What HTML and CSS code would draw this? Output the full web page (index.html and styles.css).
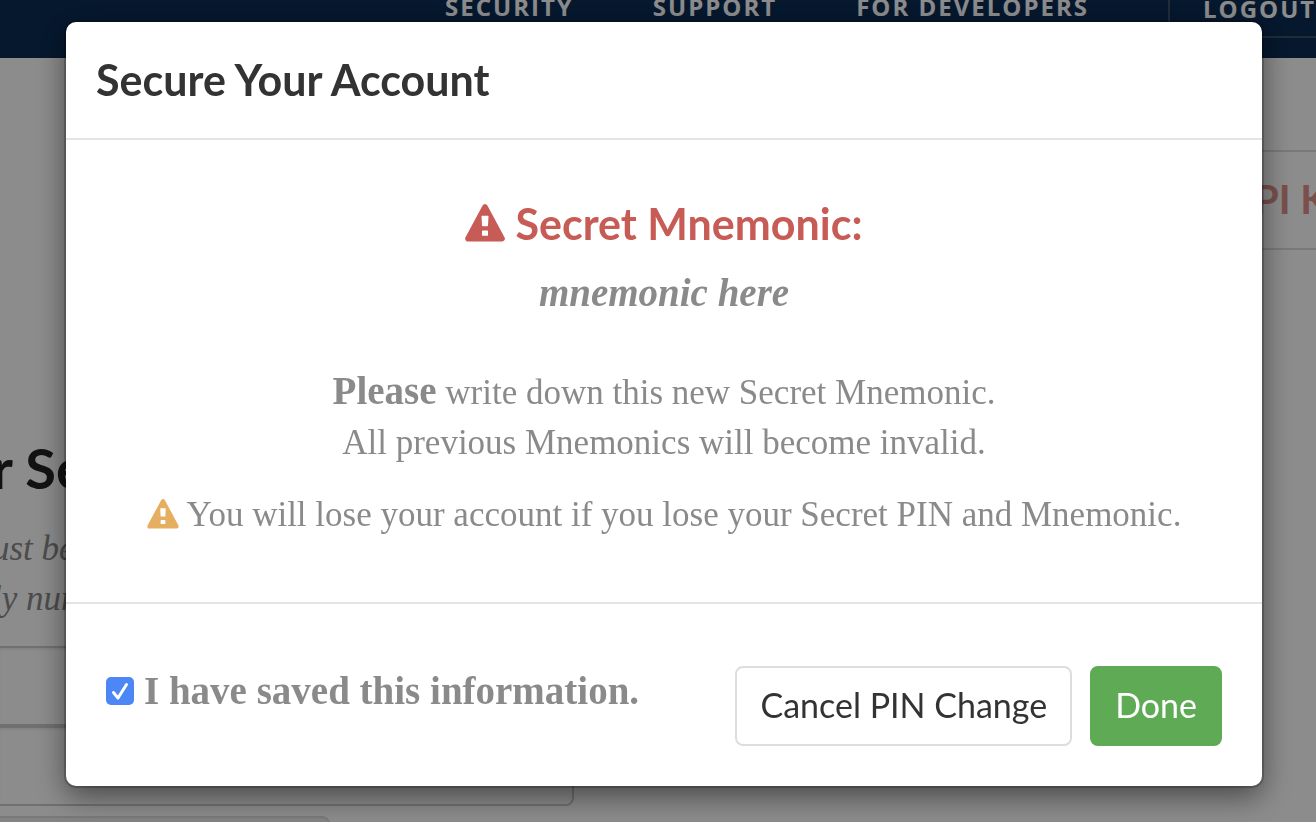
FILE: index.html
```html
<!DOCTYPE html>
<html lang="en">
	<head>
		<meta charset="utf-8" />
		<title>Secure Your Account</title>
		<meta name="viewport" content="width=device-width, initial-scale=1.0" />
		<link rel="stylesheet" href="styles.css">
	</head>

	<body>
		<div class="page">
			<header class="navbar">
				<nav class="nav">
					<a href="#security">SECURITY</a>
					<a href="#support">SUPPORT</a>
					<a href="#developers">FOR DEVELOPERS</a>
				</nav>
				<a class="logout" href="#logout">LOGOUT</a>
			</header>

			<div class="tabs">
				<a href="#keys">PI Keys</a>
			</div>

			<div class="pin-form">
				<h1>r Secret</h1>
				<p class="hint">ust be<br />ly num</p>
				<input class="top" type="password" aria-label="PIN" />
				<input class="bottom" type="password" aria-label="Confirm PIN" />
				<button type="button" class="change" aria-label="Change PIN"></button>
			</div>
		</div>

		<div class="backdrop">
			<div class="modal" role="dialog" aria-labelledby="modal-title">
				<div class="modal-header">
					<h2 id="modal-title">Secure Your Account</h2>
				</div>

				<div class="modal-body">
					<h2 class="danger">
						<svg class="icon icon-lg" viewBox="0 0 40 38" aria-hidden="true">
							<path fill="currentColor" fill-rule="evenodd" d="M17.6 1.6Q18.500 0 20 0T22.400 1.600L39.600 33.500Q40.200 34.700 39.500 36T37.200 37.500H2.800Q1.200 37.500 .5 36T.4 33.500ZM17 11.700Q16.500 11.700 16.500 12.300L17 21.500Q17 22.200 17.700 22.200H22.300Q23 22.200 23 21.500L23.500 12.300Q23.500 11.700 23 11.700ZM17.600 26.500Q17 26.500 17 27.100V31.200Q17 31.800 17.600 31.800H22.400Q23 31.800 23 31.200V27.100Q23 26.500 22.400 26.500Z" />
						</svg>
						Secret Mnemonic:
					</h2>
					<p class="mnemonic">mnemonic here</p>
					<p class="note"><strong>Please</strong> write down this new Secret Mnemonic.<br />All previous Mnemonics will become invalid.</p>
					<p class="warning">
						<svg class="icon" viewBox="0 0 40 38" aria-hidden="true">
							<path fill="currentColor" fill-rule="evenodd" d="M17.6 1.6Q18.500 0 20 0T22.400 1.600L39.600 33.500Q40.200 34.700 39.500 36T37.200 37.500H2.800Q1.200 37.500 .5 36T.4 33.500ZM17 11.700Q16.500 11.700 16.500 12.300L17 21.500Q17 22.200 17.700 22.200H22.300Q23 22.200 23 21.500L23.500 12.300Q23.500 11.700 23 11.700ZM17.600 26.500Q17 26.500 17 27.100V31.200Q17 31.800 17.600 31.800H22.400Q23 31.800 23 31.200V27.100Q23 26.500 22.400 26.500Z" />
						</svg>
						You will lose your account if you lose your Secret PIN and Mnemonic.
					</p>
				</div>

				<div class="modal-footer">
					<label class="saved" for="saved">
						<span class="check">
							<input type="checkbox" id="saved" checked />
							<svg viewBox="0 0 28 28" aria-hidden="true"><path d="M7.500 15.500L12 21L20.500 7.500" /></svg>
						</span>
						I have saved this information.
					</label>
					<div class="buttons">
						<button type="button" class="btn">Cancel PIN Change</button>
						<button type="button" class="btn btn-success">Done</button>
					</div>
				</div>
			</div>
		</div>
	</body>
</html>
```

FILE: styles.css
```css
* {
  box-sizing: border-box;
}
body {
  margin: 0;
  color: #8a8a8a;
  font-family: "Liberation Serif", serif;
  font-size: 35px;
  line-height: 50px;
}
h1, h2, p {
  margin: 0;
}
h1, h2, .tabs, .btn {
  font-family: Lato, sans-serif;
}
h2 {
  color: #333;
  font-size: 43px;
  line-height: 44px;
}

/* page */
.page {
  height: 100vh;
  overflow: hidden;
  background: #fff;
}
.navbar {
  display: flex;
  justify-content: flex-end;
  height: 58px;
  background: #0b2c54;
}
.navbar a {
  color: #fff;
  font-family: "Open Sans", sans-serif;
  font-size: 24px;
  font-weight: bold;
  letter-spacing: 2px;
  line-height: 36px;
  text-decoration: none;
  white-space: nowrap;
}
.nav {
  display: flex;
  gap: 79px;
  margin-top: -11px;
  padding-right: 79px;
}
.navbar .logout {
  width: 148px;
  height: 38px;
  padding-left: 33px;
  border-left: 2px solid #3d5169;
  border-bottom: 2px solid #3d5169;
  line-height: 18px;
}
.tabs {
  display: flex;
  justify-content: flex-end;
  height: 100px;
  margin: 92px 0 0 50%;
  border: solid #ddd;
  border-width: 2px 0;
}
.tabs a {
  width: 62px;
  color: #de908a;
  font-size: 40px;
  font-weight: bold;
  line-height: 94px;
  text-decoration: none;
  white-space: nowrap;
}
.pin-form {
  display: flex;
  flex-direction: column;
  align-items: flex-start;
  width: 574px;
  margin-top: 188px;
}
.pin-form h1 {
  margin-left: -8px;
  color: #222;
  font-size: 56px;
  line-height: 60px;
}
.hint {
  margin: 26px 0 22px -8px;
  font-style: italic;
}
.pin-form input {
  width: 100%;
  height: 80px;
  border: 2px solid #ccc;
  border-left: 0;
  background: #fff;
  box-shadow: inset 0 2px 2px #eee;
}
.pin-form .bottom {
  border-radius: 0 0 8px 0;
}
.change {
  flex: none;
  width: 330px;
  height: 80px;
  margin-top: 10px;
  border: 2px solid #ddd;
  border-left: 0;
  border-radius: 0 8px 8px 0;
  background: #eee;
}

/* modal */
.backdrop {
  position: fixed;
  inset: 0;
  padding: 22px 54px 36px 66px;
  background: rgba(0, 0, 0, .45);
}
.modal {
  border-radius: 10px;
  background: #fff;
  box-shadow: 0 0 0 2px rgba(0, 0, 0, .2), 0 10px 30px rgba(0, 0, 0, .5);
}
.modal-header {
  padding: 36px 30px;
  border-bottom: 2px solid #e4e4e4;
}
.modal-body {
  padding: 62px 30px;
  text-align: center;
}
.modal-body .danger {
  display: flex;
  justify-content: center;
  align-items: center;
  gap: 10px;
  color: #c75b55;
}
.icon {
  flex: none;
  width: 32px;
  height: 30px;
  margin-bottom: 2px;
  color: #e5ae60;
}
.icon-lg {
  width: 40px;
  height: 38px;
  color: #c75b55;
}
.mnemonic, .note strong, .saved {
  font-size: 39px;
  font-weight: bold;
}
.mnemonic {
  margin-top: 22px;
  font-style: italic;
}
.note {
  margin-top: 50px;
}
.note strong {
  line-height: 1;
}
.warning {
  display: flex;
  justify-content: center;
  align-items: center;
  gap: 8px;
  margin-top: 22px;
}
.modal-footer {
  display: flex;
  justify-content: space-between;
  align-items: flex-start;
  padding: 62px 40px 40px;
  border-top: 2px solid #e4e4e4;
}
.saved {
  display: flex;
  align-items: center;
  gap: 10px;
}
.check {
  position: relative;
  width: 28px;
  height: 28px;
}
.check input {
  display: block;
  width: 28px;
  height: 28px;
  margin: 0;
  border-radius: 5px;
  background: #4c87f5;
  appearance: none;
}
.check svg {
  position: absolute;
  inset: 0;
  fill: none;
  stroke: #fff;
  stroke-width: 3;
  stroke-linecap: round;
  stroke-linejoin: round;
  pointer-events: none;
  visibility: hidden;
}
.check input:checked + svg {
  visibility: visible;
}
.buttons {
  display: flex;
  gap: 18px;
}
.btn {
  height: 80px;
  padding: 0 23px 4px;
  border: 2px solid #ddd;
  border-radius: 8px;
  background: #fff;
  color: #333;
  font-size: 34px;
}
.btn-success {
  border-color: #5faa54;
  background: #5faa54;
  color: #fff;
}
```
